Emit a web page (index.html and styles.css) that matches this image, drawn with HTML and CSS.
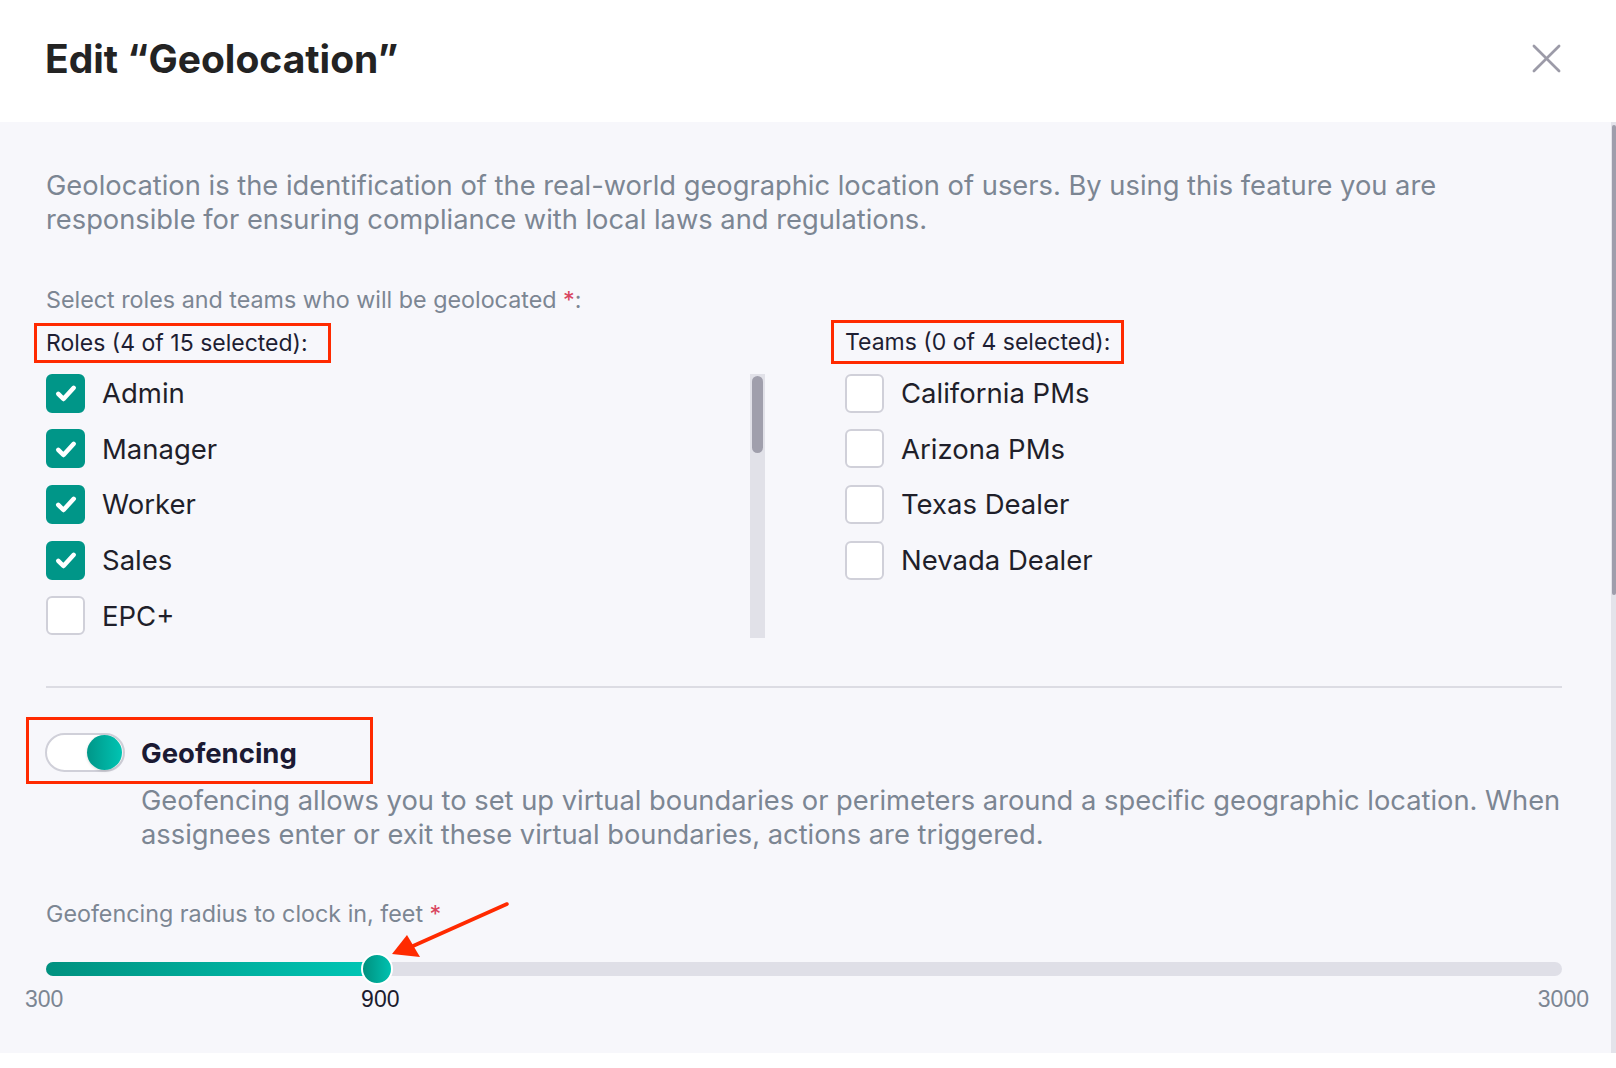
FILE: index.html
```html
<!DOCTYPE html>
<html lang="en">
<head>
    <meta charset="UTF-8">
    <meta name="viewport" content="width=device-width, initial-scale=1.0">
    <title>Edit Geolocation</title>
    <link rel="stylesheet" href="styles.css">
</head>
<body>
    <div class="modal">
        <div class="modal-header">
            <h1>Edit “Geolocation”</h1>
            <button class="close-btn" aria-label="Close">
                <svg viewBox="0 0 30 30" fill="none" stroke="currentColor" stroke-width="2.8" stroke-linecap="round">
                    <line x1="2" y1="2" x2="28" y2="28"></line>
                    <line x1="28" y1="2" x2="2" y2="28"></line>
                </svg>
            </button>
        </div>

        <div class="modal-body">
            <div class="body-content">
                <p class="intro">Geolocation is the identification of the real-world geographic location of users. By using this feature you are responsible for ensuring compliance with local laws and regulations.</p>

                <div class="field-label">Select roles and teams who will be geolocated <span class="req">*</span>:</div>

                <div class="columns">
                    <div class="column">
                        <div class="group-title"><span class="mark mark-roles">Roles (4 of 15 selected):</span></div>
                        <div class="list-wrap">
                            <ul class="check-list">
                                <li class="check-item"><span class="checkbox checked"><svg viewBox="0 0 24 24"><path d="M6.2 12.6l3.9 3.9 7.7-8.4"></path></svg></span>Admin</li>
                                <li class="check-item"><span class="checkbox checked"><svg viewBox="0 0 24 24"><path d="M6.2 12.6l3.9 3.9 7.7-8.4"></path></svg></span>Manager</li>
                                <li class="check-item"><span class="checkbox checked"><svg viewBox="0 0 24 24"><path d="M6.2 12.6l3.9 3.9 7.7-8.4"></path></svg></span>Worker</li>
                                <li class="check-item"><span class="checkbox checked"><svg viewBox="0 0 24 24"><path d="M6.2 12.6l3.9 3.9 7.7-8.4"></path></svg></span>Sales</li>
                                <li class="check-item"><span class="checkbox"></span>EPC+</li>
                            </ul>
                            <div class="list-scrollbar"><div class="thumb"></div></div>
                        </div>
                    </div>
                    <div class="column">
                        <div class="group-title"><span class="mark mark-teams">Teams (0 of 4 selected):</span></div>
                        <div class="list-wrap">
                            <ul class="check-list">
                                <li class="check-item"><span class="checkbox"></span>California PMs</li>
                                <li class="check-item"><span class="checkbox"></span>Arizona PMs</li>
                                <li class="check-item"><span class="checkbox"></span>Texas Dealer</li>
                                <li class="check-item"><span class="checkbox"></span>Nevada Dealer</li>
                            </ul>
                        </div>
                    </div>
                </div>

                <hr class="divider">

                <div class="toggle-row">
                    <span class="toggle on"><span class="knob"></span></span>
                    <span class="toggle-label">Geofencing</span>
                </div>
                <p class="toggle-desc">Geofencing allows you to set up virtual boundaries or perimeters around a specific geographic location. When assignees enter or exit these virtual boundaries, actions are triggered.</p>

                <div class="radius-field">
                    <div class="field-label">Geofencing radius to clock in, feet <span class="req">*</span></div>
                    <div class="slider">
                        <div class="track">
                            <div class="fill" style="width: 21.85%"></div>
                            <div class="thumb" style="left: 21.85%"></div>
                        </div>
                        <div class="slider-labels">
                            <span class="min">300</span>
                            <span class="value" style="left: 21.85%">900</span>
                            <span class="max">3000</span>
                        </div>
                    </div>
                    <svg class="pointer" viewBox="0 0 130 64" fill="#ff2a00" stroke="#ff2a00">
                        <line x1="121" y1="4" x2="27" y2="46" stroke-width="3.6" stroke-linecap="round"></line>
                        <polygon points="6,54 21,35 34,57" stroke="none"></polygon>
                    </svg>
                </div>
            </div>
            <div class="page-scrollbar"><div class="thumb"></div></div>
        </div>

        <div class="modal-footer"></div>
    </div>
</body>
</html>
```

FILE: styles.css
```css
:root {
    --bg: #f7f7fb;
    --text-dark: #1e1e33;
    --text-muted: #7c8693;
    --teal: #009688;
    --teal-light: #00c4b3;
    --border: #d0d0d9;
    --track: #dfdfe7;
    --mark: #ff2a00;
    --req: #d9455f;
}

* {
    box-sizing: border-box;
}

body {
    margin: 0;
    font-family: Inter, "Noto Sans", sans-serif;
    background: #fff;
    color: var(--text-dark);
}

.modal {
    height: 100vh;
    display: flex;
    flex-direction: column;
}

/* header */
.modal-header {
    flex: none;
    height: 122px;
    display: flex;
    align-items: center;
    justify-content: space-between;
    padding: 0 55px 6px 45px;
    background: #fff;
}

.modal-header h1 {
    margin: 0;
    font-size: 39px;
    font-weight: 700;
    color: #232323;
}

.close-btn {
    width: 29px;
    height: 29px;
    padding: 0;
    border: none;
    background: none;
    color: #9c9ba8;
    cursor: pointer;
}

.close-btn svg {
    width: 29px;
    height: 29px;
    display: block;
}

/* body */
.modal-body {
    flex: 1;
    display: flex;
    background: var(--bg);
    overflow: hidden;
}

.body-content {
    flex: 1;
    padding: 47px 49px 0 46px;
}

.page-scrollbar {
    flex: none;
    width: 5px;
    padding: 3px 0 0 1px;
    background: #e3e3ea;
}

.page-scrollbar .thumb {
    height: 470px;
    border-radius: 2px;
    background: #9e9dab;
}

.intro {
    margin: 0;
    font-size: 27.3px;
    line-height: 34px;
    color: var(--text-muted);
}

.field-label {
    margin-top: 49px;
    font-size: 23.3px;
    line-height: 28px;
    color: var(--text-muted);
}

.req {
    color: var(--req);
}

/* roles / teams */
.columns {
    display: grid;
    grid-template-columns: 719px 1fr;
    column-gap: 80px;
}

.group-title {
    display: flex;
    margin-top: 9px;
}

.mark {
    border: 3px solid var(--mark);
    font-size: 23px;
    line-height: 28px;
    color: var(--text-dark);
}

.mark-roles {
    margin-left: -12px;
    padding: 3px 20px 3px 9px;
}

.mark-teams {
    margin: -3px 0 -1px -14px;
    padding: 5px 11px;
}

.list-wrap {
    display: flex;
    height: 264px;
    margin-top: 11px;
}

.check-list {
    flex: 1;
    margin: 0;
    padding: 0;
    list-style: none;
    overflow: hidden;
    display: flex;
    flex-direction: column;
    gap: 17.7px;
}

.check-item {
    display: flex;
    align-items: center;
    gap: 17px;
    height: 38px;
    flex: none;
    font-size: 27.5px;
    color: #1f1f2a;
}

.checkbox {
    width: 39px;
    height: 39px;
    flex: none;
    border: 2px solid var(--border);
    border-radius: 6px;
    background: #fff;
    display: flex;
    align-items: center;
    justify-content: center;
}

.checkbox svg {
    width: 32px;
    height: 32px;
    fill: none;
    stroke: #fff;
    stroke-width: 3.4;
    stroke-linecap: round;
    stroke-linejoin: round;
}

.checkbox.checked {
    background: var(--teal);
    border-color: var(--teal);
}

.list-scrollbar {
    flex: none;
    width: 15px;
    padding: 2px;
    background: #e1e1e8;
}

.list-scrollbar .thumb {
    height: 77px;
    border-radius: 6px;
    background: #a09fac;
}

.divider {
    margin: 48px 0 0;
    border: none;
    border-top: 2px solid #dcdce3;
}

/* geofencing toggle */
.toggle-row {
    display: inline-flex;
    align-items: center;
    gap: 16px;
    margin: 29px 0 0 -20px;
    padding: 13px 73px 9px 16px;
    border: 3px solid var(--mark);
}

.toggle {
    width: 80px;
    height: 39px;
    padding: 0 1px;
    border: 2px solid var(--border);
    border-radius: 20px;
    background: #fff;
    display: flex;
    align-items: center;
}

.toggle.on {
    justify-content: flex-end;
}

.toggle .knob {
    width: 35px;
    height: 35px;
    border-radius: 50%;
    background: linear-gradient(90deg, var(--teal), var(--teal-light));
    box-shadow: 0 1px 3px rgba(0, 0, 0, 0.15);
}

.toggle-label {
    font-size: 27.5px;
    font-weight: 700;
    color: #1b1a33;
}

.toggle-desc {
    margin: 0 0 0 95px;
    font-size: 27.3px;
    line-height: 34px;
    color: var(--text-muted);
}

/* radius slider */
.radius-field {
    position: relative;
    margin-top: 48px;
}

.radius-field .field-label {
    margin-top: 0;
}

.slider {
    padding-top: 34px;
}

.track {
    position: relative;
    height: 14px;
    border-radius: 7px;
    background: var(--track);
}

.track .fill {
    height: 100%;
    border-radius: 7px 0 0 7px;
    background: linear-gradient(90deg, #00917f, #00c7b6);
}

.track .thumb {
    position: absolute;
    top: 50%;
    width: 32px;
    height: 32px;
    border: 2px solid #fff;
    border-radius: 50%;
    background: linear-gradient(90deg, #00917f, #00c1b0);
    transform: translate(-50%, -50%);
}

.slider-labels {
    position: relative;
    display: flex;
    justify-content: space-between;
    margin-top: 11px;
    font-family: "Liberation Sans", Arial, sans-serif;
    font-size: 23px;
    line-height: 24px;
    color: var(--text-muted);
}

.slider-labels .min {
    margin-left: -21px;
}

.slider-labels .max {
    margin-right: -27px;
}

.slider-labels .value {
    position: absolute;
    top: 0;
    transform: translateX(-42%);
    color: #1c1c2e;
}

.pointer {
    position: absolute;
    left: 340px;
    top: 0;
    width: 130px;
    height: 64px;
}

.modal-footer {
    flex: none;
    height: 15px;
    background: #fff;
}
```
